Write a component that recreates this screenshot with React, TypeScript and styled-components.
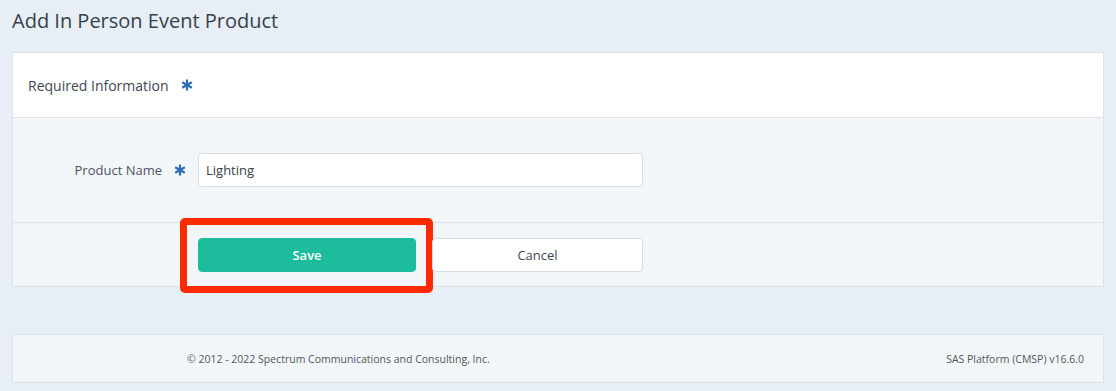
import React from 'react';
import styled, { createGlobalStyle } from 'styled-components';

const GlobalStyle = createGlobalStyle`
  body {
    margin: 0;
    background: #e8eef5;
    font-family: 'Open Sans', 'Noto Sans', sans-serif;
    color: #3b4651;
  }
  * { box-sizing: border-box; }
`;

const Page = styled.div`
  width: 1116px;
  height: 391px;
  padding: 0 12px;
  display: flex;
  flex-direction: column;
`;

const Title = styled.h1`
  margin: 0;
  height: 52px;
  padding-top: 6px;
  font-size: 20px;
  font-weight: 400;
  line-height: 30px;
  color: #36414c;
`;

const Panel = styled.div`
  border: 1px solid #dbe2ea;
  background: #f3f6f9;
`;

const PanelHeader = styled.div`
  height: 65px;
  background: #ffffff;
  border-bottom: 1px solid #dbe2ea;
  display: flex;
  align-items: center;
  padding-left: 15px;
  font-size: 14px;
  color: #3d4853;
`;

const Row = styled.div<{ $last?: boolean }>`
  display: flex;
  align-items: center;
  padding: ${p => (p.$last ? '15px 0 14px' : '35px 0')};
  border-bottom: ${p => (p.$last ? 'none' : '1px solid #dbe2ea')};
`;

const Label = styled.div`
  width: 185px;
  display: flex;
  justify-content: flex-end;
  align-items: center;
  padding-right: 12px;
  font-size: 13px;
  color: #4a5562;
`;

const Input = styled.input`
  width: 445px;
  height: 34px;
  border: 1px solid #d6dde5;
  border-radius: 4px;
  background: #ffffff;
  padding: 0 7px;
  font-family: inherit;
  font-size: 13px;
  color: #36414c;
  outline: none;
`;

const Actions = styled.div`
  display: flex;
  gap: 16px;
`;

const Button = styled.button<{ $primary?: boolean }>`
  position: relative;
  width: ${p => (p.$primary ? '218px' : '211px')};
  height: 34px;
  border-radius: 4px;
  border: 1px solid ${p => (p.$primary ? '#1dbc9c' : '#d6dde5')};
  background: ${p => (p.$primary ? '#1dbc9c' : '#ffffff')};
  color: ${p => (p.$primary ? '#ffffff' : '#3d4853')};
  font-family: inherit;
  font-size: 13px;
  font-weight: ${p => (p.$primary ? 600 : 400)};
  cursor: pointer;
`;

const Highlight = styled.span`
  position: absolute;
  left: -19px;
  top: -21px;
  width: 253px;
  height: 75px;
  border: 7px solid #ff2a00;
  border-radius: 5px;
  pointer-events: none;
`;

const Star = styled.svg<{ $gap: number }>`
  width: 12px;
  height: 12px;
  margin-left: ${p => p.$gap}px;
  flex: none;
`;

const Footer = styled.div`
  margin-top: 47px;
  height: 49px;
  border: 1px solid #dbe2ea;
  background: #f3f6f9;
  display: flex;
  align-items: center;
  justify-content: space-between;
  padding: 0 19px 0 174px;
  font-size: 10.5px;
  color: #4e5660;
`;

function Asterisk({ gap }: { gap: number }) {
  return (
    <Star $gap={gap} viewBox="0 0 12 12">
      <g stroke="#2c6db4" strokeWidth="2.2" strokeLinecap="butt">
        <line x1="6" y1="0.5" x2="6" y2="11.5" />
        <line x1="1.2" y1="3.2" x2="10.8" y2="8.8" />
        <line x1="1.2" y1="8.8" x2="10.8" y2="3.2" />
      </g>
    </Star>
  );
}

export default function App() {
  return (
    <>
      <GlobalStyle />
      <Page>
        <Title>Add In Person Event Product</Title>
        <Panel>
          <PanelHeader>
            Required Information
            <Asterisk gap={12} />
          </PanelHeader>
          <Row>
            <Label>
              Product Name
              <Asterisk gap={12} />
            </Label>
            <Input defaultValue="Lighting" />
          </Row>
          <Row $last>
            <Label />
            <Actions>
              <Button $primary>
                Save
                <Highlight />
              </Button>
              <Button>Cancel</Button>
            </Actions>
          </Row>
        </Panel>
        <Footer>
          <span>© 2012 - 2022 Spectrum Communications and Consulting, Inc.</span>
          <span>SAS Platform (CMSP) v16.6.0</span>
        </Footer>
      </Page>
    </>
  );
}
